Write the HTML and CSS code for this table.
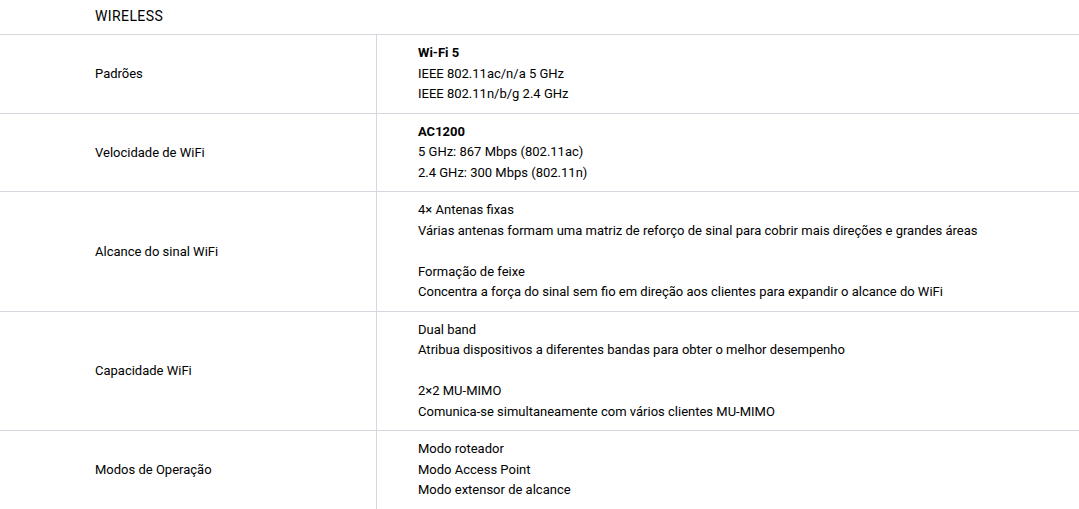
FILE: index.html
```html
<!DOCTYPE html>
<html lang="pt">
<head>
<meta charset="utf-8">
<link rel="stylesheet" href="styles.css">
</head>
<body>
<div class="specs">
  <div class="section-title">WIRELESS</div>
  <div class="row">
    <div class="label">Padrões</div>
    <div class="value"><b>Wi-Fi 5</b><br>IEEE 802.11ac/n/a 5 GHz<br>IEEE 802.11n/b/g 2.4 GHz</div>
  </div>
  <div class="row">
    <div class="label">Velocidade de WiFi</div>
    <div class="value"><b>AC1200</b><br>5 GHz: 867 Mbps (802.11ac)<br>2.4 GHz: 300 Mbps (802.11n)</div>
  </div>
  <div class="row">
    <div class="label">Alcance do sinal WiFi</div>
    <div class="value">4× Antenas fixas<br>Várias antenas formam uma matriz de reforço de sinal para cobrir mais direções e grandes áreas<br><br>Formação de feixe<br>Concentra a força do sinal sem fio em direção aos clientes para expandir o alcance do WiFi</div>
  </div>
  <div class="row">
    <div class="label">Capacidade WiFi</div>
    <div class="value">Dual band<br>Atribua dispositivos a diferentes bandas para obter o melhor desempenho<br><br>2×2 MU-MIMO<br>Comunica-se simultaneamente com vários clientes MU-MIMO</div>
  </div>
  <div class="row">
    <div class="label">Modos de Operação</div>
    <div class="value">Modo roteador<br>Modo Access Point<br>Modo extensor de alcance</div>
  </div>
</div>
</body>
</html>
```
FILE: styles.css
```css
html, body {
  margin: 0;
  padding: 0;
  background: #fff;
}
body {
  font-family: Roboto, "Liberation Sans", sans-serif;
  font-size: 13px;
  color: #000;
}
.specs {
  width: 1079px;
}
.section-title {
  height: 35px;
  padding-left: 95px;
  line-height: 32px;
  font-size: 14px;
  letter-spacing: 0.4px;
  border-bottom: 1px solid #d6d6de;
  box-sizing: border-box;
}
.row {
  display: grid;
  grid-template-columns: 377px 1fr;
  border-bottom: 1px solid #d6d6de;
}
.label {
  display: flex;
  align-items: center;
  padding-left: 95px;
  border-right: 1px solid #d6d6de;
}
.value {
  padding: 8px 0 8px 41px;
  line-height: 20.5px;
}
.value b {
  font-weight: 700;
}
```
